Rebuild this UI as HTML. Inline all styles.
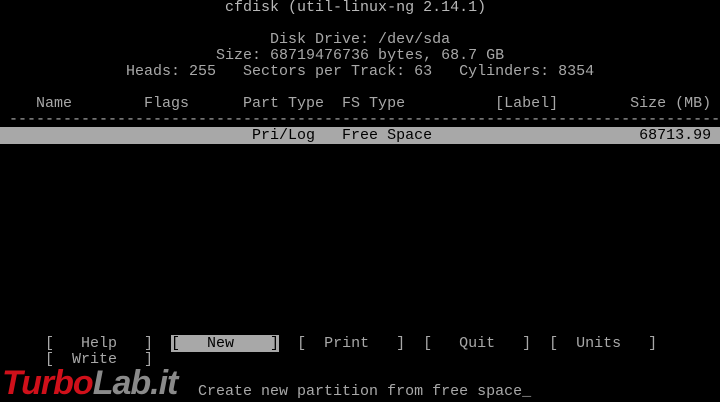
<!DOCTYPE html>
<html><head><meta charset="utf-8"><style>
html,body{margin:0;padding:0;background:#000;width:720px;height:400px;overflow:hidden}
pre{position:absolute;left:0;top:0;margin:0;font-family:"Liberation Mono",monospace;font-size:15px;line-height:16px;color:#a8a8a8;white-space:pre}
.hl{background:#a8a8a8;color:#000}
.w{color:#b8b8b8}
.logo{position:absolute;left:2px;top:364px;font-family:"Liberation Sans",sans-serif;font-weight:bold;font-style:italic;font-size:34px;line-height:38px;letter-spacing:-1px}
.logo .r{color:#d0101a}
.logo .g{color:#8a8a8a}
</style></head><body>
<pre><span class="w">                         cfdisk (util-linux-ng 2.14.1)</span>

                              Disk Drive: /dev/sda
                        Size: 68719476736 bytes, 68.7 GB
              Heads: 255   Sectors per Track: 63   Cylinders: 8354

    Name        Flags      Part Type  FS Type          [Label]        Size (MB)
 -------------------------------------------------------------------------------
<span class="hl">                            Pri/Log   Free Space                       68713.99 </span>












     [   Help   ]  <span class="hl">[   New    ]</span>  [  Print   ]  [   Quit   ]  [  Units   ]
     [  Write   ]

                      Create new partition from free space_</pre>
<div class="logo"><span class="r">Turbo</span><span class="g">Lab.it</span></div>
</body></html>
